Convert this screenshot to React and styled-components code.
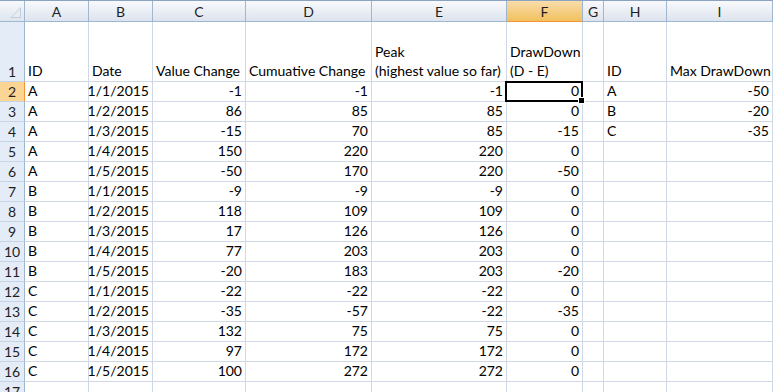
import React from "react";
import styled, { createGlobalStyle, css } from "styled-components";

const columns = [
  { key: "A", width: 64, align: "left" },
  { key: "B", width: 64, align: "right" },
  { key: "C", width: 93, align: "right" },
  { key: "D", width: 126, align: "right" },
  { key: "E", width: 135, align: "right" },
  { key: "F", width: 76, align: "right" },
  { key: "G", width: 21, align: "left" },
  { key: "H", width: 63, align: "left" },
  { key: "I", width: 106, align: "right" },
];

const headerRow = [
  "ID",
  "Date",
  "Value Change",
  "Cumuative Change",
  ["Peak", "(highest value so far)"],
  ["DrawDown", "(D - E)"],
  "",
  "ID",
  "Max DrawDown",
];

const data = [
  ["A", "1/1/2015", -1, -1, -1, 0],
  ["A", "1/2/2015", 86, 85, 85, 0],
  ["A", "1/3/2015", -15, 70, 85, -15],
  ["A", "1/4/2015", 150, 220, 220, 0],
  ["A", "1/5/2015", -50, 170, 220, -50],
  ["B", "1/1/2015", -9, -9, -9, 0],
  ["B", "1/2/2015", 118, 109, 109, 0],
  ["B", "1/3/2015", 17, 126, 126, 0],
  ["B", "1/4/2015", 77, 203, 203, 0],
  ["B", "1/5/2015", -20, 183, 203, -20],
  ["C", "1/1/2015", -22, -22, -22, 0],
  ["C", "1/2/2015", -35, -57, -22, -35],
  ["C", "1/3/2015", 132, 75, 75, 0],
  ["C", "1/4/2015", 97, 172, 172, 0],
  ["C", "1/5/2015", 100, 272, 272, 0],
];

const summary = [
  ["A", -50],
  ["B", -20],
  ["C", -35],
];

const GlobalStyle = createGlobalStyle`
  html, body {
    margin: 0;
    padding: 0;
    background: #ffffff;
    overflow: hidden;
  }
  body {
    font-family: Lato, "Liberation Sans", Arial, sans-serif;
    color: #000;
  }
`;

const Sheet = styled.div`
  display: grid;
  grid-template-columns: 25px ${columns.map((c) => `${c.width}px`).join(" ")};
  grid-template-rows: 21px 60px repeat(16, 20px);
  width: 773px;
  height: 392px;
  overflow: hidden;
  border-top: 1px solid #8ba3c1;
  box-sizing: border-box;
  font-size: 14px;
`;

const Corner = styled.div`
  position: relative;
  box-sizing: border-box;
  background: linear-gradient(#f6f8fb, #dee5ef);
  border-right: 1px solid #9eb6ce;
  border-bottom: 1px solid #9eb6ce;
  svg {
    position: absolute;
    right: 3px;
    bottom: 3px;
  }
`;

const ColHeader = styled.div`
  box-sizing: border-box;
  display: flex;
  align-items: center;
  justify-content: center;
  color: #1f1f1f;
  font-size: 14px;
  background: linear-gradient(#f8f9fc, #dde4ee);
  border-right: 1px solid #9eb6ce;
  border-bottom: 1px solid #9eb6ce;
  ${(p) =>
    p.$active &&
    css`
      background: linear-gradient(#f9dcab, #f1c15e);
      border-bottom-color: #f29536;
    `}
`;

const RowHeader = styled.div`
  box-sizing: border-box;
  display: flex;
  align-items: flex-end;
  justify-content: center;
  padding-bottom: 1px;
  color: #1f1f1f;
  font-size: 14px;
  background: #e4ecf7;
  border-right: 1px solid #9eb6ce;
  border-bottom: 1px solid #c5d3e5;
  ${(p) =>
    p.$active &&
    css`
      background: #fbd594;
      border-right-color: #f29536;
    `}
`;

const Cell = styled.div`
  position: relative;
  box-sizing: border-box;
  display: flex;
  flex-direction: column;
  justify-content: flex-end;
  align-items: ${(p) => (p.$align === "right" ? "flex-end" : "flex-start")};
  padding: 0 3px 1px;
  white-space: nowrap;
  line-height: 19px;
  border-right: 1px solid #d0d7e5;
  border-bottom: 1px solid #d0d7e5;
  ${(p) =>
    p.$selected &&
    css`
      &::after {
        content: "";
        position: absolute;
        left: -2px;
        top: -1px;
        right: -1px;
        bottom: -1px;
        border: 2px solid #000;
        pointer-events: none;
      }
      &::before {
        content: "";
        position: absolute;
        right: -3px;
        bottom: -3px;
        width: 5px;
        height: 5px;
        background: #000;
        border: 1px solid #fff;
        z-index: 2;
      }
    `}
`;

function renderCell(value, align, key, selected) {
  const lines = Array.isArray(value) ? value : [value];
  return (
    <Cell key={key} $align={align} $selected={selected}>
      {lines.map((l, i) => (
        <span key={i}>{l}</span>
      ))}
    </Cell>
  );
}

export default function App() {
  const rows = [];
  for (let r = 0; r < 16; r++) {
    const d = data[r];
    const s = summary[r];
    rows.push([
      ...(d || ["", "", "", "", "", ""]),
      "",
      s ? s[0] : "",
      s ? s[1] : "",
    ]);
  }

  return (
    <>
      <GlobalStyle />
      <Sheet>
        <Corner>
          <svg width="11" height="11" viewBox="0 0 11 11">
            <polygon points="11,0 11,11 0,11" fill="#c3cddb" />
            <polygon points="10,2 10,10 2,10" fill="#e8edf3" />
          </svg>
        </Corner>
        {columns.map((c) => (
          <ColHeader key={c.key} $active={c.key === "F"}>
            {c.key}
          </ColHeader>
        ))}

        <RowHeader>1</RowHeader>
        {columns.map((c, i) => renderCell(headerRow[i], "left", `h-${c.key}`))}

        {rows.map((vals, r) => (
          <React.Fragment key={r}>
            <RowHeader $active={r === 0}>{r + 2}</RowHeader>
            {columns.map((c, i) =>
              renderCell(vals[i], c.align, `${r}-${c.key}`, r === 0 && c.key === "F")
            )}
          </React.Fragment>
        ))}
      </Sheet>
    </>
  );
}
